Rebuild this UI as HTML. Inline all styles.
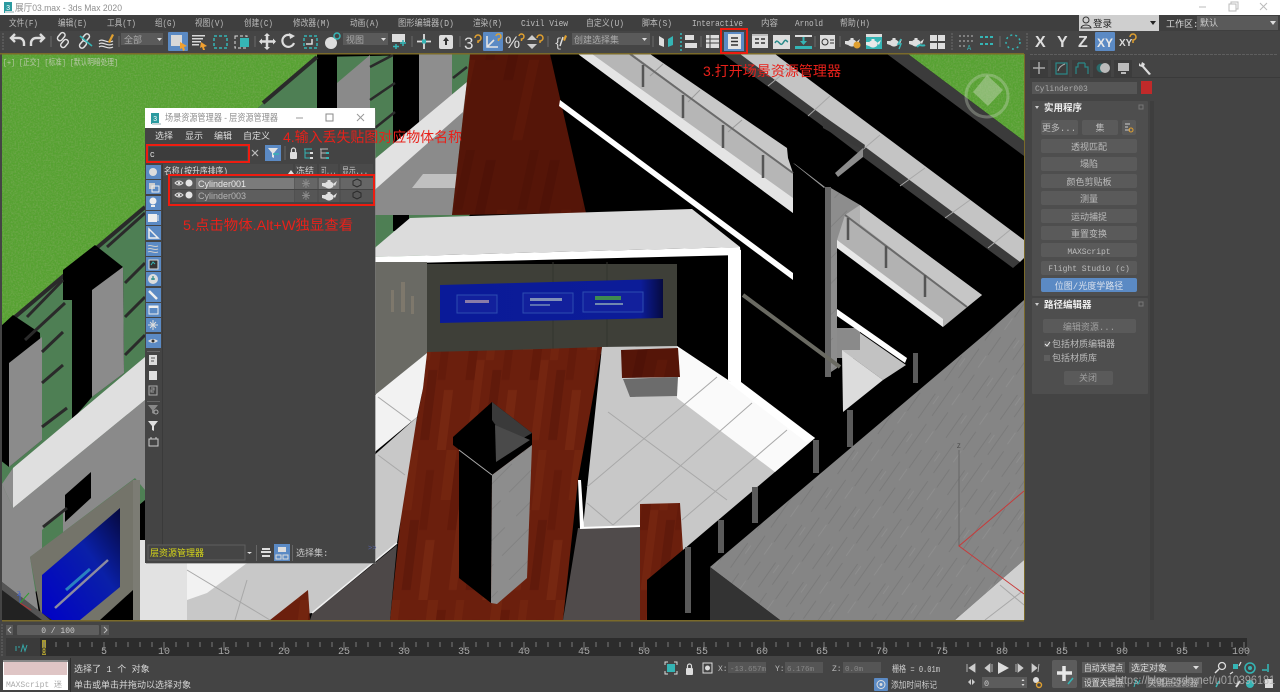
<!DOCTYPE html>
<html lang="zh">
<head>
<meta charset="utf-8">
<title>展厅03.max - 3ds Max 2020</title>
<style>
html,body{margin:0;padding:0;width:1280px;height:692px;overflow:hidden;background:#444}
svg{position:absolute;left:0;top:0;display:block;filter:blur(.35px)}
text{font-family:"Liberation Mono","Noto Sans CJK SC",monospace;font-size:9px;fill:#bcbcbc}
.s{font-family:"Liberation Sans","Noto Sans CJK SC",sans-serif}
.m{text-anchor:middle}
.r{font-family:"Liberation Sans","Noto Sans CJK SC",sans-serif;font-size:14px;fill:#e8211a}
.n{font-size:10px;fill:#a8a8a8;text-anchor:middle}
.te{fill:none;stroke:#35b5b5;stroke-width:1.6}
.btn{fill:#5a5a5a}
</style>
</head>
<body>
<svg width="1280" height="692" viewBox="0 0 1280 692" xmlns="http://www.w3.org/2000/svg">
<defs>
<clipPath id="vp"><rect x="2" y="54" width="1022" height="566"/></clipPath>
<filter id="grass" x="0" y="0" width="100%" height="100%">
<feTurbulence type="fractalNoise" baseFrequency=".6" numOctaves="2" seed="4" result="n"/>
<feColorMatrix in="n" type="matrix" values="0 0 0 0 .20  0 0 0 0 .42  0 0 0 0 .10  1.3 0 0 0 -.5"/>
<feComposite in2="SourceGraphic" operator="in" result="c"/>
<feMerge><feMergeNode in="SourceGraphic"/><feMergeNode in="c"/></feMerge>
</filter>
<pattern id="wood" width="64" height="150" patternUnits="userSpaceOnUse" patternTransform="skewX(-7)">
<rect width="64" height="150" fill="#6b1f0d"/>
<rect x="0" y="10" width="9" height="70" fill="#631a0a"/>
<rect x="9" y="60" width="8" height="80" fill="#742510"/>
<rect x="18" y="0" width="8" height="60" fill="#72240f"/>
<rect x="26" y="70" width="9" height="70" fill="#601a0b"/>
<rect x="36" y="20" width="8" height="60" fill="#641b0b"/>
<rect x="44" y="90" width="9" height="60" fill="#762711"/>
<rect x="54" y="0" width="10" height="50" fill="#73250f"/>
</pattern>
<pattern id="woodd" width="64" height="150" patternUnits="userSpaceOnUse" patternTransform="skewX(-12)">
<rect width="64" height="150" fill="#551508"/>
<rect x="8" y="10" width="10" height="70" fill="#4f1207"/>
<rect x="30" y="60" width="10" height="80" fill="#5c1809"/>
<rect x="50" y="0" width="9" height="60" fill="#501307"/>
</pattern>
<pattern id="mb" width="46" height="34" patternUnits="userSpaceOnUse" patternTransform="rotate(-55)">
<rect width="46" height="34" fill="#858585"/>
<path d="M0 6h30M10 16h36M0 27h22" stroke="#7a7a7a" stroke-width="1"/>
<path d="M30 26h14M20 10h10" stroke="#8e8e8e" stroke-width="1"/>
</pattern>
<pattern id="mbl" width="50" height="40" patternUnits="userSpaceOnUse" patternTransform="rotate(-45)">
<rect width="50" height="40" fill="#8d8d8d"/>
<path d="M0 10h34M12 28h38" stroke="#828282" stroke-width="1"/>
</pattern>
<linearGradient id="blu" x1="0" y1="1" x2="1" y2="0"><stop offset="0" stop-color="#0000c8"/><stop offset=".6" stop-color="#0a20a8"/><stop offset="1" stop-color="#06083c"/></linearGradient>
<linearGradient id="scr" x1="0" y1="0" x2="1" y2="0"><stop offset="0" stop-color="#0a1a98"/><stop offset=".9" stop-color="#0c1c98"/><stop offset="1" stop-color="#060a40"/></linearGradient>
<g id="tp"><ellipse cx="0" cy="1" rx="4.600" ry="3.600"/><rect x="-1.500" y="-4" width="3" height="2"/><path d="M4 0l4-3-2 5zM-4 -1l-3 0v3l3 1z"/></g>
</defs>

<!-- ===== viewport ===== -->
<g clip-path="url(#vp)">
<rect x="2" y="54" width="1022" height="566" fill="#000"/>
<polygon points="2,54 320,54 2,330" fill="#56a232" filter="url(#grass)"/>
<polygon points="2,328 317,57 470,54 470,215 145,500 2,620" fill="#4e7f54"/>
<rect x="317" y="54" width="20" height="76" fill="#000"/>
<polygon points="337,83 370,55 370,135 337,135" fill="#8a8a8a"/>
<rect x="393" y="54" width="26" height="120" fill="#000"/>
<polygon points="419,54 452,54 452,120 419,150" fill="#8e8e8e"/>
<g stroke="#2a2a2a" stroke-width="2.5"><line x1="370" y1="67" x2="393" y2="55"/><line x1="370" y1="100" x2="395" y2="83"/><line x1="370" y1="132" x2="395" y2="112"/><line x1="453" y1="78" x2="467" y2="67"/></g>
<!-- white band + wall under it -->
<polygon points="370,163 467,82 452,215 370,215" fill="#8b8b8b"/>
<polygon points="370,163 467,82 463,112 370,194" fill="#e2e2e2"/>
<polygon points="423,174 457,174 456,188 412,188" fill="#c0c0c0"/>
<rect x="370" y="215" width="40" height="20" fill="#4e7f54"/>
<rect x="393" y="215" width="16" height="16" fill="#000"/>
<!-- left rail + fence -->
<line x1="2" y1="328" x2="145" y2="207" stroke="#2a2a2a" stroke-width="4"/>
<line x1="263" y1="103" x2="317" y2="57" stroke="#2a2a2a" stroke-width="4"/>
<polygon points="0,327 13,315 40,333 42,440 9,467 0,460" fill="#000"/>
<polygon points="9,363 42,337 42,440 9,467" fill="#8b8b8b"/>
<polygon points="63,270 95,245 123,267 124,373 92,397 72,420 63,440" fill="#000"/>
<polygon points="92,290 123,267 124,373 92,397" fill="#8b8b8b"/>
<rect x="63" y="300" width="9" height="130" fill="#4e7f54"/>
<g stroke="#2a2a2a" stroke-width="3"><line x1="27" y1="317" x2="63" y2="280"/><line x1="25" y1="340" x2="65" y2="303"/><line x1="107" y1="247" x2="145" y2="213"/><line x1="125" y1="283" x2="145" y2="263"/><line x1="125" y1="317" x2="145" y2="297"/><line x1="42" y1="352" x2="63" y2="332"/><line x1="42" y1="383" x2="63" y2="365"/><line x1="42" y1="427" x2="67" y2="408"/><line x1="125" y1="355" x2="145" y2="335"/><line x1="125" y1="458" x2="145" y2="440"/></g>
<polygon points="2,484 13,468 145,357 145,400 13,508" fill="#8d8d8d"/>
<polygon points="13,468 145,357 145,400 13,508" fill="#dfdfdf"/>
<polygon points="2,484 13,508 145,400 145,490 135,478 30,557 40,620 2,620" fill="#8a8a8a"/>
<polygon points="65,495 91,472 91,498 65,522" fill="#000"/>
<polygon points="42,530 63,510 63,535 42,550" fill="#4e7f54"/>
<line x1="43" y1="527" x2="67" y2="508" stroke="#2a2a2a" stroke-width="3"/>
<polygon points="30,557 133,480 133,590 100,620 42,620" fill="#74746a"/>
<polygon points="42,575 120,508 120,587 80,620 42,620" fill="url(#blu)"/>
<line x1="55" y1="608" x2="108" y2="560" stroke="#8c8ca0" stroke-width="2.500"/>
<line x1="66" y1="590" x2="90" y2="569" stroke="#2a80c0" stroke-width="3"/>
<polygon points="2,582 42,613 52,620 2,620" fill="#222"/>
<polygon points="2,582 42,613 50,620 42,620 2,590" fill="#555"/>
<line x1="20" y1="603" x2="20" y2="593" stroke="#3c5ac0"/><line x1="20" y1="603" x2="31" y2="610" stroke="#c03030"/><line x1="20" y1="603" x2="29" y2="593" stroke="#30a030"/>
<text x="17" y="596" style="font-size:6px;fill:#4060d0">Z</text>
<rect x="133" y="480" width="7" height="140" fill="#7c7c74"/>
<rect x="140" y="540" width="47" height="80" fill="#e2e2e2"/>
<!-- wood central -->
<polygon points="470,54 550,54 586,213 452,215" fill="url(#woodd)"/>
<!-- balcony 1 -->
<polygon points="578,54 632,54 793,173 793,213" fill="#b6b6b6"/>
<polygon points="578,54 592,54 793,198 793,213" fill="#e4e4e4"/>
<polygon points="632,54 650,54 787,148 788,158 793,173" fill="#c8c8c8"/>
<g stroke="#9a9a9a"><line x1="663" y1="64" x2="650" y2="76"/><line x1="700" y1="90" x2="688" y2="102"/><line x1="742" y1="120" x2="728" y2="132"/></g>
<line x1="630" y1="54" x2="793" y2="173" stroke="#6a6a6a" stroke-width="2"/>
<g stroke="#555" stroke-width="2.500"><line x1="643" y1="65" x2="643" y2="87"/><line x1="683" y1="95" x2="683" y2="118"/><line x1="723" y1="125" x2="723" y2="148"/><line x1="763" y1="155" x2="763" y2="178"/></g>
<polygon points="560,100 793,273 793,280 559,106" fill="#fff"/>
<!-- top right -->
<polygon points="908,54 1024,54 1024,141" fill="#56a232" filter="url(#grass)"/>
<polygon points="887,54 908,54 1024,141 1024,156" fill="#3b3b3b"/>
<polygon points="723,54 740,54 1020,262 1013,268 863,157 817,122" fill="#3b3b3b"/>
<polygon points="740,54 775,54 1024,240 1024,258 1020,262" fill="#c4c4c4"/>
<g stroke="#a8a8a8"><line x1="790" y1="68" x2="768" y2="86"/><line x1="830" y1="96" x2="808" y2="116"/><line x1="880" y1="135" x2="860" y2="152"/><line x1="925" y1="168" x2="900" y2="186"/><line x1="970" y1="200" x2="945" y2="218"/><line x1="1010" y1="230" x2="988" y2="248"/></g>
<polygon points="822,115 865,145 863,150 823,128" fill="#393939"/>
<polygon points="863,148 863,157 838,177 835,173" fill="#8c8c8c"/>
<polygon points="793,163 795,164 825,187 824,188" fill="#999"/>
<!-- nav cube -->
<circle cx="987" cy="96" r="21" fill="none" stroke="#c8d4c0" stroke-width="3" opacity=".35"/>
<polygon points="987,75 1003,90 988,106 973,92" fill="#b8d0a8" opacity=".55"/>
<!-- column marble -->
<rect x="825" y="187" width="6" height="190" fill="#666"/>
<polygon points="831,188 860,205 860,226 837,240 837,368 831,372" fill="url(#mbl)"/>
<rect x="837" y="328" width="23" height="30" fill="#8a8a8a"/>
<!-- balcony 2 -->
<polygon points="837,240 845,215 860,205 982,295 943,327 837,247" fill="#b2b2b2"/>
<polygon points="837,240 943,319 943,327 837,248" fill="#e8e8e8"/>
<polygon points="860,205 982,295 967,307 860,224" fill="#c6c6c6"/>
<line x1="845" y1="215" x2="967" y2="307" stroke="#6a6a6a" stroke-width="2"/>
<g stroke="#555" stroke-width="2.500"><line x1="848" y1="218" x2="848" y2="240"/><line x1="886" y1="246" x2="886" y2="268"/><line x1="925" y1="275" x2="925" y2="297"/></g>
<polygon points="837,309 907,358 905,363 837,316" fill="#fff"/>
<polygon points="860,333 906,365 883,380 842,350 860,350" fill="#c2c2c2"/>
<polygon points="842,350 883,380 843,412" fill="#dcdcdc"/>
<line x1="743" y1="295" x2="840" y2="367" stroke="#6a6a62" stroke-width="4"/>
<!-- room ceiling -->
<polygon points="410,218 692,209 740,247 370,257 370,252" fill="#dcdcdc"/>
<polygon points="370,257 740,247 741,255 370,264" fill="#fff"/>
<rect x="728" y="250" width="13" height="134" fill="#fff"/>
<!-- room interior -->
<rect x="370" y="262" width="57" height="132" fill="#6a6a64"/>
<g fill="#7e786c"><rect x="391" y="290" width="3" height="22"/><rect x="401" y="282" width="4" height="30"/><rect x="411" y="296" width="3" height="18"/></g>
<rect x="427" y="264" width="250" height="90" fill="#3e3f38"/>
<rect x="677" y="257" width="51" height="100" fill="#000"/>
<g stroke="#33342e"><line x1="553" y1="262" x2="553" y2="354"/><line x1="607" y1="262" x2="607" y2="354"/></g>
<polygon points="440,285 663,279 663,318 440,323" fill="url(#scr)"/>
<g fill="#12209c" stroke="#2c4cb0"><rect x="457" y="295" width="40" height="18"/><rect x="523" y="293" width="50" height="20"/><rect x="583" y="292" width="60" height="20"/></g>
<rect x="595" y="296" width="26" height="4" fill="#3e8a50"/>
<rect x="465" y="300" width="24" height="3" fill="#8a7ca8"/>
<rect x="530" y="298" width="32" height="3" fill="#8090b8"/>
<rect x="530" y="304" width="20" height="2" fill="#5a70b0"/>
<rect x="595" y="303" width="28" height="2" fill="#7088b0"/>
<!-- room floor -->
<polygon points="602,347 677,346 815,438 683,550 640,527 583,527" fill="#c8c8c8"/>
<polygon points="677,346 815,438 775,472 677,398" fill="#fafafa"/>
<polygon points="728,382 741,382 815,438 806,442" fill="#fff"/>
<g stroke="#a8a8a8"><line x1="587" y1="487" x2="717" y2="377"/><line x1="613" y1="525" x2="752" y2="403"/><line x1="682" y1="520" x2="787" y2="430"/><line x1="608" y1="412" x2="727" y2="500"/><line x1="587" y1="503" x2="613" y2="525"/></g>
<!-- room wood -->
<polygon points="427,352 510,350 602,347 578,480 563,620 390,620 405,480 423,388" fill="url(#wood)"/>
<polygon points="578,528 642,527 647,620 563,620" fill="#504b4b"/>
<polygon points="578,480 580,528 584,528 581,480" fill="#fff"/>
<line x1="580" y1="528" x2="640" y2="526" stroke="#fff" stroke-width="2"/>
<polygon points="621,350 678,348 680,377 622,378" fill="url(#woodd)"/>
<polygon points="623,379 678,377 677,396 630,397" fill="#6c6c6c"/>
<polygon points="640,504 680,503 683,550 647,580 647,620 640,620" fill="url(#wood)"/>
<polygon points="647,580 683,550 690,545 700,620 647,620" fill="#000"/>
<!-- central column -->
<polygon points="492,402 532,433 532,445 492,475 453,445 453,437" fill="#000"/>
<polygon points="492,402 532,433 510,446 492,420" fill="#3a3a3a"/>
<polygon points="495,425 530,440 496,462" fill="#4a4a4a"/>
<polygon points="459,450 492,475 491,603 459,578" fill="#000"/>
<polygon points="492,475 532,445 527,578 497,604 491,603" fill="url(#mbl)"/>
<line x1="459" y1="450" x2="492" y2="475" stroke="#aaa"/>
<!-- left floor under the dialog -->
<polygon points="370,399 427,353 423,388 417,417 370,456" fill="#f2f2f2"/>
<polygon points="370,459 417,417 397,543 312,613 270,620 187,620 187,560 370,560" fill="#c8c8c8"/>
<polygon points="187,563 247,563 207,593 187,600" fill="#f2f2f2"/>
<polygon points="397,545 390,620 310,620 312,614" fill="#4d4848"/>
<line x1="397" y1="543" x2="312" y2="613" stroke="#f0f0f0" stroke-width="1.500"/>
<polygon points="270,620 308,590 310,620" fill="url(#wood)"/>
<g stroke="#a8a8a8"><line x1="378" y1="397" x2="412" y2="422"/><line x1="378" y1="455" x2="405" y2="475"/><line x1="187" y1="570" x2="270" y2="620"/><line x1="247" y1="580" x2="235" y2="620"/></g>
<!-- small lower-right pillars -->
<g fill="#5a5a5a"><rect x="847" y="410" width="6" height="37"/><rect x="813" y="440" width="6" height="33"/><rect x="752" y="487" width="6" height="36"/><rect x="718" y="520" width="6" height="33"/><rect x="685" y="547" width="6" height="66"/><rect x="913" y="353" width="5" height="30"/></g>
<!-- big marble top -->
<polygon points="710,567 990,330 1024,300 1024,560 955,620 780,620" fill="url(#mb)"/>
<polygon points="710,567 780,620 710,620" fill="#333"/>
<polygon points="1024,560 955,620 1024,620" fill="#d0d0d0"/>
<g stroke="#a8a8a8"><line x1="1000" y1="585" x2="1024" y2="605"/><line x1="1024" y1="590" x2="985" y2="620"/></g>
<line x1="959" y1="546" x2="959" y2="450" stroke="#666"/>
<text x="957" y="448" style="font-size:6px;fill:#444">Z</text>
<polyline points="1024,491 959,546 1024,594" fill="none" stroke="#c83a3a"/>
<text x="3" y="65" style="font-size:8.500px;fill:#b8c8a8" textLength="115" lengthAdjust="spacingAndGlyphs">[+] [正交] [标准] [默认明暗处理]</text>
<text x="703" y="76" class="r" textLength="138" lengthAdjust="spacingAndGlyphs">3.打开场景资源管理器</text>
</g>

<!-- ===== title bar ===== -->
<rect x="0" y="0" width="1280" height="15" fill="#fff"/>
<rect x="4" y="2" width="8" height="11" fill="#2b9aa0"/><path d="M5 11h9v2H5z" fill="#c9d6d8"/>
<text x="6" y="10" style="font-size:7px;fill:#fff">3</text>
<text x="15" y="11" class="s" style="font-size:9.500px;fill:#8e8e8e" textLength="107" lengthAdjust="spacingAndGlyphs">展厅03.max - 3ds Max 2020</text>
<line x1="1199" y1="7" x2="1206" y2="7" stroke="#bbb"/>
<path d="M1229 4h7v7h-7zM1231 4v-2h7v7h-2" fill="none" stroke="#bbb"/>
<path d="M1260 3l7 7M1267 3l-7 7" stroke="#bbb"/>

<!-- ===== menu bar ===== -->
<rect x="0" y="15" width="1280" height="16" fill="#3f3f3f"/>
<text x="9" y="26" textLength="29" lengthAdjust="spacingAndGlyphs">文件(F)</text>
<text x="58" y="26" textLength="29" lengthAdjust="spacingAndGlyphs">编辑(E)</text>
<text x="107" y="26" textLength="29" lengthAdjust="spacingAndGlyphs">工具(T)</text>
<text x="155" y="26" textLength="21" lengthAdjust="spacingAndGlyphs">组(G)</text>
<text x="195" y="26" textLength="29" lengthAdjust="spacingAndGlyphs">视图(V)</text>
<text x="244" y="26" textLength="29" lengthAdjust="spacingAndGlyphs">创建(C)</text>
<text x="293" y="26" textLength="37" lengthAdjust="spacingAndGlyphs">修改器(M)</text>
<text x="350" y="26" textLength="29" lengthAdjust="spacingAndGlyphs">动画(A)</text>
<text x="398" y="26" textLength="56" lengthAdjust="spacingAndGlyphs">图形编辑器(D)</text>
<text x="473" y="26" textLength="29" lengthAdjust="spacingAndGlyphs">渲染(R)</text>
<text x="521" y="26" textLength="47" lengthAdjust="spacingAndGlyphs">Civil View</text>
<text x="586" y="26" textLength="38" lengthAdjust="spacingAndGlyphs">自定义(U)</text>
<text x="642" y="26" textLength="30" lengthAdjust="spacingAndGlyphs">脚本(S)</text>
<text x="692" y="26" textLength="51" lengthAdjust="spacingAndGlyphs">Interactive</text>
<text x="761" y="26" textLength="17" lengthAdjust="spacingAndGlyphs">内容</text>
<text x="795" y="26" textLength="28" lengthAdjust="spacingAndGlyphs">Arnold</text>
<text x="840" y="26" textLength="30" lengthAdjust="spacingAndGlyphs">帮助(H)</text>
<rect x="1079" y="15" width="80" height="16" fill="#cfcfcf"/>
<circle cx="1086" cy="20" r="3" fill="none" stroke="#333"/><path d="M1081 28c1-4 9-4 10 0z" fill="none" stroke="#333"/>
<text x="1093" y="27" style="fill:#222;font-size:9.500px">登录</text>
<path d="M1150 21h6l-3 4z" fill="#222"/>
<text x="1166" y="27" style="fill:#ddd;font-size:9px">工作区:</text>
<rect x="1197" y="16" width="81" height="14" fill="#5a5a5a"/>
<text x="1200" y="26" style="fill:#ccc">默认</text>
<path d="M1270 21h6l-3 4z" fill="#ddd"/>

<!-- ===== toolbar ===== -->
<rect x="0" y="31" width="1280" height="23" fill="#454545"/>
<rect x="0" y="53" width="1024" height="1.500" fill="#7a6a2a"/>
<line x1="3" y1="33" x2="3" y2="51" stroke="#6a6a6a" stroke-dasharray="2 1"/>
<g fill="none" stroke="#dcdcdc" stroke-width="2.400">
<path d="M24 46v-3a5 5 0 0 0-5-5h-8M15 34l-4 4 4 4"/>
<path d="M31 46v-3a5 5 0 0 1 5-5h8M40 34l4 4-4 4"/>
</g>
<g fill="none" stroke="#e0e0e0" stroke-width="1.500">
<rect x="57" y="37" width="9" height="5" rx="2.500" transform="rotate(-50 61.500 39.500) translate(2 -2)"/>
<rect x="60" y="41" width="9" height="5" rx="2.500" transform="rotate(-50 64.500 43.500)"/>
<rect x="82" y="35" width="8" height="5" rx="2.500" transform="rotate(-50 86 37.500)"/>
<rect x="79" y="42" width="8" height="5" rx="2.500" transform="rotate(-50 83 44.500)"/>
</g>
<line x1="80" y1="36" x2="92" y2="46" stroke="#35b5b5" stroke-width="1.600"/>
<g fill="none" stroke="#e0e0e0" stroke-width="1.200"><path d="M99 44c4-3 8 3 14 0M99 47c4-3 8 3 14 0M99 41c4-3 8 3 14 0"/></g><path d="M108 42l4-8 2 1-4 8z" fill="#e0a030"/>
<g stroke="#6a6a6a"><line x1="51" y1="36" x2="51" y2="47"/><line x1="119" y1="36" x2="119" y2="47"/><line x1="255" y1="36" x2="255" y2="47"/><line x1="412" y1="36" x2="412" y2="47"/><line x1="460" y1="36" x2="460" y2="47"/><line x1="548" y1="36" x2="548" y2="47"/><line x1="653" y1="36" x2="653" y2="47"/><line x1="701" y1="36" x2="701" y2="47"/><line x1="815" y1="36" x2="815" y2="47"/><line x1="840" y1="36" x2="840" y2="47"/><line x1="952" y1="33" x2="952" y2="51" stroke-dasharray="2 1"/><line x1="1000" y1="36" x2="1000" y2="47"/><line x1="1027" y1="33" x2="1027" y2="51" stroke-dasharray="2 1"/></g>
<rect x="121" y="33" width="42" height="12" fill="#5a5a5a"/><text x="124" y="43" style="fill:#aaa">全部</text><path d="M157 38h5l-2.500 3z" fill="#ddd"/>
<rect x="168" y="32" width="20" height="19" rx="1" fill="#5b8ac4"/><rect x="171" y="35" width="11" height="11" fill="#d8d8d8"/><path d="M180 42l7 4-3 1 1 3-2 1-1-3-2 1z" fill="#f0a030"/>
<g fill="#d8d8d8"><rect x="192" y="35" width="13" height="1.500"/><rect x="192" y="38" width="11" height="1.500"/><rect x="192" y="41" width="9" height="1.500"/><rect x="192" y="44" width="7" height="1.500"/></g><path d="M201 42l6 4-3 1 1 3-2 0-1-3-2 1z" fill="#f0a030"/>
<rect x="214" y="36" width="13" height="12" fill="none" stroke="#35b5b5" stroke-width="1.500" stroke-dasharray="3 2"/>
<rect x="235" y="36" width="12" height="12" fill="none" stroke="#ddd" stroke-dasharray="3 2"/><rect x="240" y="38" width="9" height="9" fill="#35b5b5"/>
<path d="M267 34v15M260 41.500h15" stroke="#ddd" stroke-width="2.500"/><path d="M267 33l3 3h-6zM267 50l3-3h-6zM259 41.500l3-3v6zM276 41.500l-3-3v6z" fill="#ddd"/>
<path d="M293 37a6 6 0 1 0 1 6" fill="none" stroke="#ddd" stroke-width="2.200"/><path d="M289 33l6 3-5 3z" fill="#ddd"/>
<rect x="304" y="36" width="13" height="12" fill="none" stroke="#35b5b5" stroke-width="1.500" stroke-dasharray="3 2"/><path d="M306 44h6v-5" fill="none" stroke="#ddd" stroke-width="1.500"/>
<ellipse cx="331" cy="43" rx="6" ry="6" fill="#ddd"/><circle cx="337" cy="36" r="3" fill="none" stroke="#35b5b5" stroke-width="1.500"/>
<rect x="343" y="33" width="45" height="12" fill="#5a5a5a"/><text x="346" y="43" style="fill:#aaa">视图</text><path d="M381 38h5l-2.500 3z" fill="#ddd"/>
<rect x="392" y="34" width="13" height="8" fill="#ddd"/><path d="M396 44v5M393 46.500h6M403 40v6M400 43h6" stroke="#35b5b5" stroke-width="1.500"/>
<path d="M424 34v15M417 41.500h14" stroke="#ddd" stroke-width="1.800"/><rect x="422" y="39.500" width="4" height="4" fill="#35b5b5"/>
<rect x="439" y="35" width="14" height="14" rx="2" fill="#ddd"/><path d="M446 37l3 4h-6z" fill="#333"/><rect x="445" y="41" width="2" height="4" fill="#333"/>
<text x="464" y="49" style="font-size:17px;fill:#ddd;font-family:'Liberation Sans',sans-serif">3</text><path d="M475 38a3 3 0 1 1 3 3v2" fill="none" stroke="#e0a030" stroke-width="1.500"/>
<rect x="483" y="32" width="20" height="19" rx="1" fill="#5b8ac4"/><path d="M487 36v11h11M487 47l7-7" fill="none" stroke="#e4e4e4" stroke-width="1.600"/><path d="M496 36a2.500 2.500 0 1 1 2.500 3v2" fill="none" stroke="#e0a030" stroke-width="1.500"/>
<text x="505" y="48" style="font-size:17px;fill:#ddd;font-family:'Liberation Sans',sans-serif">%</text><path d="M519 36a2.500 2.500 0 1 1 2.500 3v2" fill="none" stroke="#e0a030" stroke-width="1.500"/>
<path d="M532 35l5 5h-10zM532 49l5-5h-10z" fill="#ccc"/><path d="M537 38a3 3 0 1 1 3 3v2" fill="none" stroke="#e0a030" stroke-width="1.500"/>
<text x="554" y="47" style="font-size:13px;fill:#ddd">{</text><path d="M560 46l3-9" stroke="#ddd" stroke-width="1.500"/><path d="M563 40l2-5 2 1-2 5z" fill="#e0a030"/>
<rect x="572" y="33" width="78" height="12" fill="#5a5a5a"/><text x="574" y="43" style="fill:#aaa">创建选择集</text><path d="M642 38h5l-2.500 3z" fill="#ddd"/>
<path d="M659 36l5 3v8l-5-2z" fill="#ddd"/><path d="M673 36l-5 3v8l5-2z" fill="#35b5b5"/>
<path d="M681 33v18" class="te" stroke-dasharray="2 2"/><rect x="685" y="35" width="9" height="5" fill="#ddd"/><rect x="685" y="43" width="12" height="5" fill="#ddd"/>
<rect x="706" y="35" width="13" height="13" fill="#ddd"/><path d="M706 39h13M706 43h13M710 35v13" stroke="#444"/>
<rect x="721" y="29" width="26" height="24" fill="none" stroke="#ee1c10" stroke-width="2"/>
<rect x="724" y="32" width="20" height="19" fill="#5b8ac4"/><rect x="728" y="34" width="13" height="15" fill="#e4e4e4"/><path d="M731 38h7M731 41.500h7M731 45h7" stroke="#333" stroke-width="1.500"/>
<rect x="752" y="36" width="16" height="12" fill="#ddd"/><path d="M755 39h4M761 39h4M755 43h4M761 43h4" stroke="#333" stroke-width="1.500"/><rect x="752" y="34" width="16" height="2" fill="#bbb"/>
<rect x="773" y="35" width="17" height="14" fill="#ddd"/><path d="M775 43c3-6 5 5 8 0s3-2 5-1" stroke="#2a8a8a" fill="none" stroke-width="1.500"/>
<path d="M795 36h17" stroke="#ddd" stroke-width="2"/><path d="M803.500 37v7" stroke="#35b5b5" stroke-width="2"/><path d="M800 41l3.500 4 3.500-4z" fill="#35b5b5"/><rect x="795" y="46" width="17" height="3" fill="#35b5b5"/>
<rect x="820" y="35" width="15" height="14" fill="#ddd"/><circle cx="825" cy="42" r="3" fill="none" stroke="#333"/><path d="M830 40h4M830 43h4" stroke="#333"/>
<use href="#tp" x="852" y="42" fill="#ddd"/><circle cx="857" cy="45" r="3.500" fill="#e0a030"/>
<rect x="866" y="34" width="16" height="15" fill="#35b5b5"/><rect x="866" y="34" width="16" height="3" fill="#ddd"/><use href="#tp" x="873" y="43" fill="#e8e8e8"/>
<use href="#tp" x="894" y="42" fill="#ddd"/><path d="M901 39l-3 5h3l-2 5" fill="none" stroke="#35b5b5" stroke-width="1.400"/>
<use href="#tp" x="916" y="42" fill="#ddd"/><path d="M917 47c3-4 5 0 8-2" stroke="#35b5b5" stroke-width="2" fill="none"/>
<g fill="#ddd"><rect x="930" y="35" width="7" height="6"/><rect x="938" y="35" width="7" height="6"/><rect x="930" y="43" width="7" height="6"/><rect x="938" y="43" width="7" height="6"/></g>
<path d="M959 36h14M959 41h14M959 46h8" stroke="#bbb" stroke-dasharray="2 2"/><text x="967" y="50" style="font-size:7px;fill:#35b5b5">A</text>
<path d="M980 37h14M980 44h14" stroke="#35b5b5" stroke-width="2" stroke-dasharray="3 2"/>
<circle cx="1013" cy="42" r="7" fill="none" stroke="#35b5b5" stroke-width="1.500" stroke-dasharray="2 3"/>
<text x="1035" y="47" class="s" style="font-size:16px;font-weight:bold;fill:#ddd">X</text>
<text x="1057" y="47" class="s" style="font-size:16px;font-weight:bold;fill:#ddd">Y</text>
<text x="1078" y="47" class="s" style="font-size:16px;font-weight:bold;fill:#ddd">Z</text>
<rect x="1095" y="32" width="20" height="19" rx="1" fill="#5b8ac4"/>
<text x="1097" y="47" class="s" style="font-size:12px;font-weight:bold;fill:#e8e8e8">XY</text>
<text x="1119" y="46" class="s" style="font-size:10px;font-weight:bold;fill:#ddd">XY</text>
<path d="M1130 37a3 3 0 1 1 3 3v3" fill="none" stroke="#e0a030" stroke-width="1.500"/>
<line x1="1030" y1="55" x2="1278" y2="55" stroke="#777" stroke-dasharray="3 1"/>

<!-- ===== command panel ===== -->
<rect x="1024" y="55" width="256" height="565" fill="#444"/>
<line x1="1024.500" y1="54" x2="1024.500" y2="620" stroke="#7a6a2a"/>
<rect x="1030" y="77" width="250" height="1" fill="#3a3a3a"/>
<g fill="#3c3c3c"><rect x="1030" y="60" width="18" height="17"/><rect x="1051" y="60" width="18" height="17"/><rect x="1072" y="60" width="18" height="17"/><rect x="1093" y="60" width="18" height="17"/><rect x="1114" y="60" width="18" height="17"/></g>
<path d="M1039 62v12M1033 68h12" stroke="#aaa" stroke-width="1.500"/>
<rect x="1056" y="63" width="11" height="11" fill="none" stroke="#2a8888" stroke-width="1.200"/><path d="M1058 71c1-4 4-6 7-7" stroke="#aaa" fill="none"/>
<path d="M1078 63h7M1078 63v4h-2v7M1085 63v4h3v7" fill="none" stroke="#2a8888" stroke-width="1.200"/>
<circle cx="1101" cy="68" r="4.500" fill="#2a6a6a"/><circle cx="1105" cy="68" r="5" fill="#bbb"/>
<rect x="1118" y="63" width="11" height="8" fill="#bbb"/><rect x="1121" y="72" width="5" height="2" fill="#bbb"/>
<path d="M1142 62l3 2-1 2 7 8-2 1-7-8-3-1v-3l2 2z" fill="#ddd"/>
<rect x="1032" y="82" width="105" height="12" fill="#565656"/>
<text x="1035" y="91" style="font-size:8px;fill:#aaa">Cylinder003</text>
<rect x="1141" y="81" width="11" height="13" fill="#c02a2a"/>
<rect x="1032" y="101" width="116" height="195" rx="1" fill="#4e4e4e"/>
<rect x="1150" y="101" width="4" height="519" fill="#3e3e3e"/>
<path d="M1035 106h4l-2 3z" fill="#ccc"/><text x="1044" y="111" style="fill:#eee;font-size:9.500px;font-weight:bold" class="s">实用程序</text>
<rect x="1139" y="105" width="4" height="4" fill="none" stroke="#777"/>
<rect class="btn" x="1041" y="120" width="37" height="15" rx="2"/><rect class="btn" x="1082" y="120" width="36" height="15" rx="2"/><rect class="btn" x="1122" y="120" width="14" height="15" rx="2"/>
<text x="1059" y="131" class="m">更多...</text><text x="1100" y="131" class="m">集</text>
<path d="M1125 124h5M1125 127h3M1125 130h5" stroke="#ccc"/><circle cx="1131" cy="130" r="2" fill="none" stroke="#e0a030"/>
<rect class="btn" x="1041" y="139" width="96" height="14" rx="2"/><text x="1089" y="150" class="m">透视匹配</text>
<rect class="btn" x="1041" y="157" width="96" height="14" rx="2"/><text x="1089" y="167" class="m">塌陷</text>
<rect class="btn" x="1041" y="174" width="96" height="14" rx="2"/><text x="1089" y="185" class="m">颜色剪贴板</text>
<rect class="btn" x="1041" y="191" width="96" height="14" rx="2"/><text x="1089" y="202" class="m">测量</text>
<rect class="btn" x="1041" y="209" width="96" height="14" rx="2"/><text x="1089" y="220" class="m">运动捕捉</text>
<rect class="btn" x="1041" y="226" width="96" height="14" rx="2"/><text x="1089" y="237" class="m">重置变换</text>
<rect class="btn" x="1041" y="243" width="96" height="14" rx="2"/><text x="1089" y="254" class="m" style="font-size:8px">MAXScript</text>
<rect class="btn" x="1041" y="261" width="96" height="14" rx="2"/><text x="1089" y="271" class="m" style="font-size:8px">Flight Studio (c)</text>
<rect x="1041" y="278" width="96" height="14" rx="2" fill="#5b8ac4"/><text x="1089" y="289" class="m" style="fill:#d8e0ec">位图/光度学路径</text>
<rect x="1032" y="298" width="116" height="96" rx="1" fill="#4e4e4e"/>
<path d="M1035 303h4l-2 3z" fill="#ccc"/><text x="1044" y="308" style="fill:#eee;font-size:9.500px;font-weight:bold" class="s">路径编辑器</text>
<rect x="1139" y="302" width="4" height="4" fill="none" stroke="#777"/>
<rect class="btn" x="1043" y="319" width="93" height="14" rx="2"/><text x="1089" y="330" class="m" style="fill:#a0a0a0">编辑资源...</text>
<rect x="1044" y="341" width="6" height="6" fill="#5e5e5e"/><path d="M1045 344l2 2 3-4" stroke="#eee" fill="none"/><text x="1052" y="347">包括材质编辑器</text>
<rect x="1044" y="355" width="6" height="6" fill="#5e5e5e"/><text x="1052" y="361">包括材质库</text>
<rect class="btn" x="1064" y="371" width="49" height="14" rx="2"/><text x="1088" y="381" class="m" style="fill:#a0a0a0">关闭</text>

<!-- ===== dialog ===== -->
<rect x="146" y="110" width="230" height="454" fill="#777" opacity=".5"/>
<rect x="145" y="108" width="230" height="455" fill="#444"/>
<rect x="145" y="108" width="230" height="20" fill="#fff"/>
<rect x="151" y="113" width="8" height="11" fill="#2b9aa0"/><path d="M152 123h9v2h-9z" fill="#c9d6d8"/><text x="153" y="121" style="font-size:7px;fill:#fff">3</text>
<text x="165" y="121" class="s" style="font-size:9.500px;fill:#8e8e8e" textLength="113" lengthAdjust="spacingAndGlyphs">场景资源管理器 - 层资源管理器</text>
<line x1="296" y1="118" x2="303" y2="118" stroke="#999"/>
<rect x="326" y="114" width="7" height="7" fill="none" stroke="#888"/>
<path d="M357 114l7 7M364 114l-7 7" stroke="#999"/>
<text x="155" y="139" style="fill:#ddd">选择</text><text x="185" y="139" style="fill:#ddd">显示</text><text x="214" y="139" style="fill:#ddd">编辑</text><text x="243" y="139" style="fill:#ddd">自定义</text>
<text x="283" y="142" class="r" textLength="179" lengthAdjust="spacingAndGlyphs">4.输入丢失贴图对应物体名称</text>
<rect x="148" y="146" width="100" height="15" fill="#3c3c3c" stroke="#555"/>
<rect x="147" y="145" width="102" height="17" fill="none" stroke="#ee1c10" stroke-width="2"/>
<text x="150" y="157" class="s" style="font-size:9px;fill:#ddd">c</text>
<path d="M252 150l6 6M258 150l-6 6" stroke="#bbb" stroke-width="1.200"/>
<rect x="265" y="145" width="16" height="16" fill="#5b8ac4"/><path d="M268 148h10l-4 5v5l-2-1v-4z" fill="#e4e4e4"/><path d="M273 154h6" stroke="#35b5b5" stroke-width="1.500"/>
<line x1="285" y1="146" x2="285" y2="160" stroke="#666"/>
<rect x="290" y="152" width="7" height="7" rx="1" fill="#ddd"/><path d="M291.500 152v-2a2 2 0 0 1 4 0v2" fill="none" stroke="#ddd" stroke-width="1.200"/>
<path d="M304 149h8M305 149v9h6M305 153h6" stroke="#35b5b5" fill="none"/><rect x="310" y="152" width="3" height="2" fill="#ddd"/><rect x="310" y="157" width="3" height="2" fill="#ddd"/>
<path d="M320 149h8M321 149v9h6M321 153h6" stroke="#bbb" fill="none"/><rect x="326" y="152" width="3" height="2" fill="#35b5b5"/><rect x="326" y="157" width="3" height="2" fill="#35b5b5"/>
<!-- header -->
<rect x="163" y="164" width="130" height="12" fill="#4a4a4a"/><rect x="295" y="164" width="22" height="12" fill="#4a4a4a"/><rect x="319" y="164" width="19" height="12" fill="#4a4a4a"/><rect x="340" y="164" width="33" height="12" fill="#4a4a4a"/>
<text x="164" y="174" style="fill:#ddd" textLength="64" lengthAdjust="spacingAndGlyphs">名称(按升序排序)</text>
<path d="M288 174h6l-3-4z" fill="#ddd"/>
<text x="296" y="174" style="fill:#ccc">冻结</text><text x="321" y="174" style="fill:#ccc" textLength="15" lengthAdjust="spacingAndGlyphs">可...</text><text x="342" y="174" style="fill:#ccc" textLength="26" lengthAdjust="spacingAndGlyphs">显示...</text>
<line x1="162.500" y1="164" x2="162.500" y2="545" stroke="#3a3a3a"/>
<!-- rows -->
<rect x="172" y="178" width="200" height="11" fill="#5a5a5a"/><rect x="196" y="178" width="98" height="11" fill="#7b7b7b"/><rect x="295" y="178" width="22" height="11" fill="#666"/><rect x="319" y="178" width="20" height="11" fill="#767676"/><rect x="341" y="178" width="32" height="11" fill="#666"/>
<rect x="172" y="190" width="200" height="12" fill="#505050"/><rect x="196" y="190" width="98" height="12" fill="#5e5e5e"/><rect x="295" y="190" width="22" height="12" fill="#565656"/><rect x="319" y="190" width="20" height="12" fill="#565656"/><rect x="341" y="190" width="32" height="12" fill="#565656"/>
<rect x="169" y="175" width="205" height="30" fill="none" stroke="#ee1c10" stroke-width="2"/>
<text x="198" y="187" class="s" style="font-size:9px;fill:#e8e8e8">Cylinder001</text>
<text x="198" y="199" class="s" style="font-size:9px;fill:#b4b4b4">Cylinder003</text>
<g fill="none" stroke="#ddd"><path d="M175 183q4-4 8 0q-4 4-8 0z"/><path d="M175 195q4-4 8 0q-4 4-8 0z"/></g><circle cx="179" cy="183" r="1.300" fill="#ddd"/><circle cx="179" cy="195" r="1.300" fill="#ddd"/>
<circle cx="189" cy="183" r="3.500" fill="#e4e4e4"/><circle cx="189" cy="195" r="3.500" fill="#e4e4e4"/>
<g stroke="#8a8a8a"><path d="M306 179v9M302 183.500h8M303 180.500l6 6M309 180.500l-6 6"/><path d="M306 191v9M302 195.500h8M303 192.500l6 6M309 192.500l-6 6"/></g>
<use href="#tp" x="329" y="184" fill="#e0e0e0"/><use href="#tp" x="329" y="196" fill="#e0e0e0"/>
<g fill="none" stroke="#2a2a2a"><path d="M357 179l4 2v4l-4 2-4-2v-4z"/><path d="M357 191l4 2v4l-4 2-4-2v-4z"/></g>
<text x="183" y="230" class="r" textLength="170" lengthAdjust="spacingAndGlyphs">5.点击物体.Alt+W独显查看</text>
<!-- sidebar -->
<g fill="#5b8ac4"><rect x="146" y="165" width="15" height="14"/><rect x="146" y="180" width="15" height="14"/><rect x="146" y="196" width="15" height="14"/><rect x="146" y="211" width="15" height="14"/><rect x="146" y="226" width="15" height="14"/><rect x="146" y="242" width="15" height="14"/><rect x="146" y="257" width="15" height="14"/><rect x="146" y="272" width="15" height="14"/><rect x="146" y="288" width="15" height="14"/><rect x="146" y="303" width="15" height="14"/><rect x="146" y="318" width="15" height="14"/><rect x="146" y="334" width="15" height="14"/></g>
<circle cx="153" cy="172" r="4" fill="#ddd"/>
<rect x="149" y="183" width="6" height="6" fill="#ccc"/><rect x="152" y="186" width="7" height="6" fill="none" stroke="#eee"/>
<circle cx="153" cy="201" r="3.500" fill="#eee"/><rect x="151" y="205" width="4" height="2" fill="#eee"/>
<rect x="148" y="214" width="9" height="8" fill="#eee"/><path d="M158 215v6" stroke="#eee"/>
<path d="M149 229v9h9z" fill="none" stroke="#eee" stroke-width="1.500"/>
<path d="M148 246c3-2 6 2 10 0M148 249c3-2 6 2 10 0M148 252c3-2 6 2 10 0" stroke="#ccc" fill="none"/>
<rect x="149" y="260" width="9" height="9" fill="#333" stroke="#ddd"/><path d="M151 265l2-3 2 2" stroke="#35b5b5" fill="none"/>
<circle cx="153" cy="279" r="5" fill="#ddd"/><path d="M153 276v4M151 279h4" stroke="#2a8a8a" stroke-width="1.200"/>
<path d="M149 291l8 8" stroke="#eee" stroke-width="2.500"/>
<rect x="149" y="306" width="9" height="8" fill="none" stroke="#eee"/><rect x="149" y="306" width="9" height="2" fill="#eee"/>
<path d="M153 320v10M148 325h10M150 322l6 6M156 322l-6 6" stroke="#ddd"/>
<path d="M148 341q5-4 10 0q-5 4-10 0z" fill="#ddd"/><circle cx="153" cy="341" r="1.500" fill="#333"/>
<line x1="147" y1="351.500" x2="160" y2="351.500" stroke="#666"/>
<rect x="149" y="355" width="8" height="10" fill="#ddd"/><path d="M151 358h4M151 361h3" stroke="#555"/>
<rect x="149" y="371" width="8" height="9" fill="#e0e0e0"/>
<rect x="149" y="386" width="8" height="9" fill="none" stroke="#aaa"/><path d="M151 388h3v2h-3v2h3" stroke="#999" fill="none"/>
<line x1="147" y1="401.500" x2="160" y2="401.500" stroke="#666"/>
<path d="M148 405h10l-4 5v4l-2-1v-3z" fill="#888"/><circle cx="156" cy="412" r="2" fill="none" stroke="#aaa"/>
<path d="M148 421h10l-4 5v5l-2-1v-4z" fill="#e0e0e0"/>
<path d="M149 439h9v7h-9zM151 439v-2M156 439v-2" fill="none" stroke="#ccc"/>
<!-- bottom -->
<rect x="148" y="545" width="97" height="15" fill="#454545" stroke="#5e5e5e"/>
<text x="150" y="556" style="fill:#d8d818">层资源管理器</text>
<path d="M247 552h5l-2.500 2z" fill="#ddd"/>
<line x1="256.500" y1="545" x2="256.500" y2="561" stroke="#666"/>
<path d="M262 549h8M261 552h10M262 556h8" stroke="#ddd" stroke-width="2"/>
<rect x="274" y="544" width="16" height="17" fill="#5b8ac4"/><rect x="278" y="547" width="8" height="5" fill="#ddd"/><rect x="276" y="555" width="5" height="4" fill="none" stroke="#ddd"/><rect x="283" y="555" width="5" height="4" fill="none" stroke="#ddd"/>
<line x1="292.500" y1="545" x2="292.500" y2="561" stroke="#666"/>
<text x="296" y="556" style="fill:#c8c8c8">选择集:</text>
<text x="368" y="550" style="font-size:7px;fill:#5560a0">&gt;&gt;</text>

<!-- ===== timeline ===== -->
<rect x="0" y="621" width="1280" height="71" fill="#444"/>
<rect x="2" y="620" width="1022" height="1.500" fill="#7a6a2a"/>
<rect x="6" y="625" width="7" height="10" fill="#5a5a5a"/><path d="M11 627l-3 3 3 3" stroke="#bbb" fill="none"/>
<rect x="17" y="625" width="82" height="10" rx="1" fill="#5e5e5e"/>
<text x="58" y="633" class="m" style="font-size:8px;fill:#ccc">0 / 100</text>
<rect x="101" y="625" width="8" height="10" fill="#5a5a5a"/><path d="M104 627l3 3-3 3" stroke="#bbb" fill="none"/>
<rect x="6" y="638" width="1241" height="18" fill="#2c2c2c"/>
<rect x="6" y="638" width="34" height="18" fill="#3a3a3a"/>
<line x1="2" y1="624" x2="2" y2="656" stroke="#666" stroke-dasharray="2 1"/>
<path d="M16 646v5M19 646v2M21 652l2-7 2 6 2-6" stroke="#35a5a5" fill="none"/>
<rect x="42" y="640" width="4" height="15" fill="#a89a30"/>
<path d="M44 642V647M56 642V647M68 642V647M80 642V647M92 642V647M104 642V650M116 642V647M128 642V647M140 642V647M152 642V647M164 642V650M176 642V647M188 642V647M200 642V647M212 642V647M224 642V650M236 642V647M248 642V647M260 642V647M272 642V647M284 642V650M296 642V647M308 642V647M320 642V647M332 642V647M344 642V650M356 642V647M368 642V647M380 642V647M392 642V647M404 642V650M416 642V647M428 642V647M440 642V647M452 642V647M464 642V650M476 642V647M488 642V647M500 642V647M512 642V647M524 642V650M536 642V647M548 642V647M560 642V647M572 642V647M584 642V650M596 642V647M608 642V647M620 642V647M632 642V647M644 642V650M656 642V647M668 642V647M680 642V647M692 642V647M704 642V650M716 642V647M728 642V647M740 642V647M752 642V647M764 642V650M776 642V647M788 642V647M800 642V647M812 642V647M824 642V650M836 642V647M848 642V647M860 642V647M872 642V647M884 642V650M896 642V647M908 642V647M920 642V647M932 642V647M944 642V650M956 642V647M968 642V647M980 642V647M992 642V647M1004 642V650M1016 642V647M1028 642V647M1040 642V647M1052 642V647M1064 642V650M1076 642V647M1088 642V647M1100 642V647M1112 642V647M1124 642V650M1136 642V647M1148 642V647M1160 642V647M1172 642V647M1184 642V650M1196 642V647M1208 642V647M1220 642V647M1232 642V647M1244 642V650" stroke="#7a7a7a"/>
<text x="44" y="654" class="n" style="fill:#333">0</text>
<text x="104" y="654" class="n">5</text><text x="164" y="654" class="n">10</text><text x="224" y="654" class="n">15</text><text x="284" y="654" class="n">20</text><text x="344" y="654" class="n">25</text><text x="404" y="654" class="n">30</text><text x="464" y="654" class="n">35</text><text x="524" y="654" class="n">40</text><text x="584" y="654" class="n">45</text><text x="644" y="654" class="n">50</text><text x="702" y="654" class="n">55</text><text x="762" y="654" class="n">60</text><text x="822" y="654" class="n">65</text><text x="882" y="654" class="n">70</text><text x="942" y="654" class="n">75</text><text x="1002" y="654" class="n">80</text><text x="1062" y="654" class="n">85</text><text x="1122" y="654" class="n">90</text><text x="1182" y="654" class="n">95</text><text x="1241" y="654" class="n">100</text>

<!-- ===== status ===== -->
<rect x="3" y="660" width="65" height="30" fill="#fff"/>
<rect x="3" y="660" width="65" height="2" fill="#888"/>
<rect x="4" y="662" width="63" height="13" fill="#dfc5c5"/>
<text x="6" y="687" style="font-size:8px;fill:#aaa">MAXScript 迷</text>
<line x1="70.500" y1="658" x2="70.500" y2="692" stroke="#2e2e2e"/>
<text x="74" y="672" style="fill:#d8d8d8">选择了 1 个 对象</text>
<text x="74" y="688" style="fill:#d8d8d8">单击或单击并拖动以选择对象</text>
<rect x="667" y="664" width="8" height="8" fill="#35b5b5"/><path d="M665 665v-3h3M674 662h3v3M677 671v3h-3M668 674h-3v-3" fill="none" stroke="#ddd"/>
<rect x="686" y="668" width="7" height="7" rx="1" fill="#ddd"/><path d="M687.500 668v-2a2 2 0 0 1 4 0v2" fill="none" stroke="#ddd" stroke-width="1.200"/>
<rect x="703" y="663" width="9" height="10" fill="none" stroke="#ddd"/><circle cx="707.500" cy="668" r="2.500" fill="#ddd"/>
<text x="718" y="671" style="font-size:8px;fill:#bbb">X:</text><rect x="728" y="662" width="38" height="11" fill="#555"/><text x="730" y="671" style="font-size:7.500px;fill:#888">-13.657m</text>
<text x="775" y="671" style="font-size:8px;fill:#bbb">Y:</text><rect x="785" y="662" width="38" height="11" fill="#555"/><text x="787" y="671" style="font-size:7.500px;fill:#888">6.176m</text>
<text x="832" y="671" style="font-size:8px;fill:#bbb">Z:</text><rect x="843" y="662" width="38" height="11" fill="#555"/><text x="845" y="671" style="font-size:7.500px;fill:#888">0.0m</text>
<text x="892" y="672" style="fill:#ccc" textLength="48" lengthAdjust="spacingAndGlyphs">栅格 = 0.01m</text>
<rect x="874" y="678" width="14" height="13" rx="1" fill="#5b8ac4"/><circle cx="881" cy="684.500" r="4" fill="none" stroke="#ddd"/><circle cx="881" cy="684.500" r="1.500" fill="#ddd"/>
<text x="891" y="688" style="fill:#ccc" textLength="46" lengthAdjust="spacingAndGlyphs">添加时间标记</text>
<path d="M967 664v8M975 664l-6 4 6 4z" fill="#ccc" stroke="#ccc" stroke-width=".8"/>
<path d="M985 668l5-4v8zM992 664v8" fill="#ccc" stroke="#ccc" stroke-width=".8"/>
<path d="M998 662l11 6-11 6z" fill="#ddd"/>
<path d="M1016 664v8M1018 664l5 4-5 4z" fill="#ccc" stroke="#ccc" stroke-width=".8"/>
<path d="M1032 664l5 4-5 4zM1039 664l-1 8" fill="#ccc" stroke="#ccc" stroke-width=".8"/>
<path d="M968 682l3-3v6zM975 682l-3-3v6z" fill="#ccc"/>
<rect x="982" y="677" width="45" height="11" fill="#5c5c5c"/><text x="984" y="686" style="fill:#ccc;font-size:8.500px">0</text><path d="M1023 679l1.500 2h-3zM1023 686l1.500-2h-3z" fill="#ddd"/>
<circle cx="1036" cy="680" r="3" fill="#ddd"/><circle cx="1039" cy="685" r="2.500" fill="none" stroke="#e0a030" stroke-width="1.400"/>
<rect x="1052" y="660" width="25" height="28" rx="2" fill="#5c5c5c"/>
<path d="M1064 666v15M1057 673h15" stroke="#e8e8e8" stroke-width="3.500"/>
<path d="M1068 684l5-6" stroke="#35b5b5" stroke-width="1.500"/>
<rect x="1082" y="662" width="43" height="11" fill="#5c5c5c"/><text x="1084" y="671" style="fill:#ddd" textLength="39" lengthAdjust="spacingAndGlyphs">自动关键点</text>
<rect x="1082" y="677" width="43" height="11" fill="#5c5c5c"/><text x="1084" y="686" style="fill:#ddd" textLength="39" lengthAdjust="spacingAndGlyphs">设置关键点</text>
<rect x="1129" y="662" width="73" height="11" fill="#5c5c5c"/><text x="1131" y="671" style="fill:#ddd">选定对象</text><path d="M1193 666h6l-3 3.500z" fill="#ddd"/>
<path d="M1134 687l2-7 2 4 2-4" stroke="#35b5b5" fill="none"/>
<rect x="1146" y="677" width="56" height="11" fill="#5c5c5c"/><text x="1148" y="686" style="fill:#bbb" textLength="50" lengthAdjust="spacingAndGlyphs">关键点过滤器</text>
<circle cx="1222" cy="666" r="3.500" fill="none" stroke="#ddd" stroke-width="1.300"/><path d="M1219 669l-4 4" stroke="#ddd" stroke-width="1.500"/>
<rect x="1233" y="664" width="5" height="5" fill="#35b5b5"/><path d="M1233 672l-3 2M1241 662l-2 4" stroke="#ddd" stroke-width="1.300"/>
<circle cx="1250" cy="668" r="5" fill="none" stroke="#35b5b5" stroke-width="1.500"/><circle cx="1250" cy="668" r="2" fill="#35b5b5"/>
<path d="M1262 670h5M1268 664v8" stroke="#35b5b5" stroke-width="1.600"/>
<path d="M1216 687l3-6" stroke="#35b5b5" stroke-width="1.500"/><path d="M1236 687l4-6" stroke="#ddd" stroke-width="2"/><circle cx="1250" cy="684" r="4" fill="#35b5b5"/><rect x="1265" y="679" width="8" height="9" fill="#ddd"/>
<text x="1115" y="684" class="s" style="font-size:12px;fill:#b4b4b4;opacity:.85" textLength="160" lengthAdjust="spacingAndGlyphs">https://blog.csdn.net/u010396181</text>
</svg>
</body>
</html>
